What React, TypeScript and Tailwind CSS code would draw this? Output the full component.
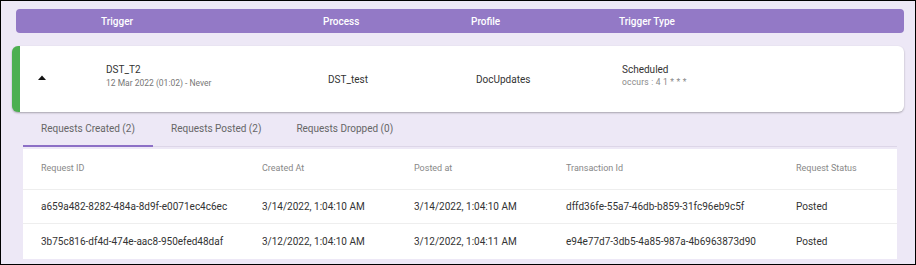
import React from "react";

const rows = [
  {
    id: "a659a482-8282-484a-8d9f-e0071ec4c6ec",
    created: "3/14/2022, 1:04:10 AM",
    posted: "3/14/2022, 1:04:10 AM",
    tx: "dffd36fe-55a7-46db-b859-31fc96eb9c5f",
    status: "Posted",
  },
  {
    id: "3b75c816-df4d-474e-aac8-950efed48daf",
    created: "3/12/2022, 1:04:10 AM",
    posted: "3/12/2022, 1:04:11 AM",
    tx: "e94e77d7-3db5-4a85-987a-4b6963873d90",
    status: "Posted",
  },
];

export default function App() {
  return (
    <div
      className="w-[916px] h-[265px] box-border border border-black bg-[#ede8f6] overflow-hidden"
      style={{ fontFamily: "Roboto, 'Noto Sans', sans-serif" }}
    >
      {/* header bar */}
      <div className="ml-[15px] mr-[11px] mt-[8px] h-[24px] rounded-[4px] bg-[#9379c6] flex items-center text-white text-[10px] font-medium">
        <div className="pl-[85px] w-[307px]">Trigger</div>
        <div className="w-[148px]">Process</div>
        <div className="w-[148px]">Profile</div>
        <div>Trigger Type</div>
      </div>

      {/* trigger card */}
      <div className="ml-[11px] mr-[11px] mt-[13px] h-[66px] rounded-[6px] bg-white border-l-[8px] border-[#4caf50] shadow-[0_1px_2px_rgba(0,0,0,0.3)] flex items-center">
        <div className="w-[86px] pl-[18px] flex items-center">
          <svg width="8" height="5" viewBox="0 0 8 5" className="mt-[-4px]">
            <polygon points="0,5 8,5 4,0.5" fill="#111" />
          </svg>
        </div>
        <div className="w-[222px] flex flex-col">
          <span className="text-[10px] text-[#333] leading-[13px] mt-[-6px]">DST_T2</span>
          <span className="text-[8.5px] text-[#777] leading-[12px] mt-[1px]">12 Mar 2022 (01:02) - Never</span>
        </div>
        <div className="w-[148px] text-[10px] text-[#333]">DST_test</div>
        <div className="w-[146px] text-[10px] text-[#333]">DocUpdates</div>
        <div className="flex flex-col">
          <span className="text-[10px] text-[#333] leading-[13px] mt-[-7px]">Scheduled</span>
          <span className="text-[8.5px] text-[#888] leading-[11px] mt-[1px] tracking-[0.2px]">occurs : 4 1 * * *</span>
        </div>
      </div>

      {/* tabs */}
      <div className="ml-[22px] mr-[18px] mt-[6px] h-[29px] flex items-stretch text-[10px] leading-[12px] text-[#666] border-b border-[#ddd6e8]">
        <div className="w-[130px] pt-[5px] text-center border-b-2 border-[#8c6fc6] mb-[-1px]">Requests Created (2)</div>
        <div className="px-[18px] pt-[5px]">Requests Posted (2)</div>
        <div className="px-[17px] pt-[5px]">Requests Dropped (0)</div>
      </div>

      {/* table */}
      <div className="ml-[22px] mr-[18px] mt-[2px] bg-white text-[10px] text-[#333]">
        <div className="h-[41px] flex items-center text-[9px] text-[#888] border-b border-[#eeeeee]">
          <div className="w-[221px] pl-[18px]">Request ID</div>
          <div className="w-[152px] pl-[18px]">Created At</div>
          <div className="w-[152px] pl-[18px]">Posted at</div>
          <div className="w-[230px] pl-[18px]">Transaction Id</div>
          <div className="pl-[18px]">Request Status</div>
        </div>
        {rows.map((r, i) => (
          <div
            key={r.id}
            className={
              i === 0
                ? "h-[34px] flex items-center border-b border-[#eeeeee]"
                : "h-[35px] flex items-center"
            }
          >
            <div className="w-[221px] pl-[18px] whitespace-nowrap">{r.id}</div>
            <div className="w-[152px] pl-[18px] whitespace-nowrap">{r.created}</div>
            <div className="w-[152px] pl-[18px] whitespace-nowrap">{r.posted}</div>
            <div className="w-[230px] pl-[18px] whitespace-nowrap">{r.tx}</div>
            <div className="pl-[18px]">{r.status}</div>
          </div>
        ))}
      </div>
    </div>
  );
}
